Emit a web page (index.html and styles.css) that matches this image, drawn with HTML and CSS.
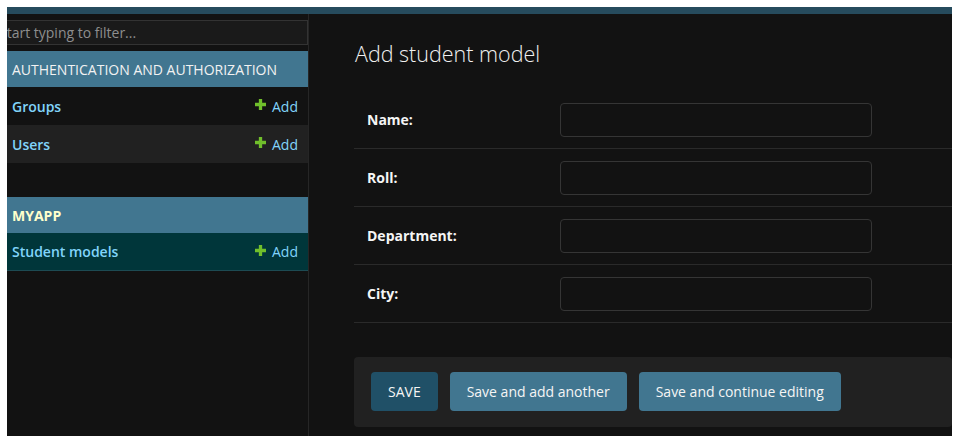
FILE: index.html
```html
<!DOCTYPE html>
<html lang="en">
<head>
<meta charset="utf-8">
<title>Add student model | Django site admin</title>
<link rel="stylesheet" href="styles.css">
</head>
<body>
<div class="frame">
  <div class="topbar"></div>
  <div class="layout">
    <nav class="sidebar">
      <input class="nav-filter" type="search" placeholder="Start typing to filter...">
      <div class="module">
        <div class="caption">Authentication and Authorization</div>
        <div class="row">
          <a class="model" href="#">Groups</a>
          <a class="addlink" href="#"><svg class="plus" viewBox="0 0 10 10" width="11" height="11"><path d="M3.5 0h3v3.5H10v3H6.5V10h-3V6.5H0v-3h3.5z" fill="#70bf2b"/></svg>Add</a>
        </div>
        <div class="row alt">
          <a class="model" href="#">Users</a>
          <a class="addlink" href="#"><svg class="plus" viewBox="0 0 10 10" width="11" height="11"><path d="M3.5 0h3v3.5H10v3H6.5V10h-3V6.5H0v-3h3.5z" fill="#70bf2b"/></svg>Add</a>
        </div>
      </div>
      <div class="module current-app">
        <div class="caption strong">MYAPP</div>
        <div class="row current">
          <a class="model" href="#">Student models</a>
          <a class="addlink" href="#"><svg class="plus" viewBox="0 0 10 10" width="11" height="11"><path d="M3.5 0h3v3.5H10v3H6.5V10h-3V6.5H0v-3h3.5z" fill="#70bf2b"/></svg>Add</a>
        </div>
      </div>
    </nav>
    <main class="content">
      <h1 class="title">Add student model</h1>
      <form class="form">
        <div class="field"><label>Name:</label><input type="text"></div>
        <div class="field"><label>Roll:</label><input type="text"></div>
        <div class="field"><label>Department:</label><input type="text"></div>
        <div class="field"><label>City:</label><input type="text"></div>
        <div class="submit-row">
          <button type="button" class="btn default">SAVE</button>
          <button type="button" class="btn">Save and add another</button>
          <button type="button" class="btn">Save and continue editing</button>
        </div>
      </form>
    </main>
  </div>
</div>
</body>
</html>
```

FILE: styles.css
```css
html, body {
  margin: 0;
  padding: 0;
  background: #ffffff;
}

body {
  font-family: "Open Sans", "Noto Sans", sans-serif;
  font-size: 14px;
  color: #eeeeee;
}

.frame {
  margin: 7px 6px 0 7px;
  height: 429px;
  background: #121212;
  overflow: hidden;
  display: flex;
  flex-direction: column;
}

.topbar {
  height: 7px;
  background: #264b5d;
  flex: none;
}

.layout {
  flex: 1;
  display: flex;
  min-height: 0;
}

.sidebar {
  width: 301px;
  flex: none;
  border-right: 1px solid #262626;
  background: #121212;
  overflow: hidden;
}

.nav-filter {
  display: block;
  box-sizing: border-box;
  margin: 6px 0 6px -9px;
  width: 310px;
  height: 25px;
  padding: 0 5px 0 0;
  background: #1a1a1a;
  border: 1px solid #333333;
  color: #eeeeee;
  font-family: inherit;
  font-size: 14px;
  outline: none;
}

.nav-filter::placeholder {
  color: #8e8e8e;
}

.module {
  margin-bottom: 34px;
}

.caption {
  height: 36px;
  display: flex;
  align-items: center;
  padding-left: 5px;
  background: #417690;
  color: #f2f2f2;
  font-size: 14px;
  text-transform: uppercase;
}

.caption.strong {
  color: #ffffcc;
  font-weight: 700;
  font-size: 14px;
}

.row {
  height: 38px;
  display: flex;
  align-items: center;
  justify-content: space-between;
  padding: 0 10px 0 5px;
  background: #121212;
}

.row.alt {
  background: #212121;
}

.row.current {
  height: 37px;
  background: #00363a;
  border-bottom: 1px solid #1d4b53;
}

.model {
  color: #81d4fa;
  font-weight: 600;
  text-decoration: none;
}

.addlink {
  color: #81d4fa;
  text-decoration: none;
  display: flex;
  align-items: center;
}

.plus {
  margin-right: 6px;
  margin-top: -3px;
}

.content {
  flex: 1;
  padding: 0 0 0 45px;
  overflow: hidden;
}

.title {
  margin: 24px 0 21px 1px;
  font-size: 21.5px;
  font-weight: 300;
  color: #f0f0f0;
  line-height: 32px;
}

.form {
  display: block;
}

.field {
  display: grid;
  grid-template-columns: 206px 312px;
  align-items: center;
  height: 57px;
  border-bottom: 1px solid #2a2a2a;
}

.field label {
  padding-left: 13px;
  font-weight: 700;
  font-size: 14px;
  color: #f5f5f5;
}

.field input {
  box-sizing: border-box;
  height: 34px;
  width: 312px;
  background: #121212;
  border: 1px solid #353535;
  border-radius: 4px;
  color: #eeeeee;
  font-family: inherit;
  font-size: 14px;
  outline: none;
}

.submit-row {
  margin-top: 34px;
  height: 70px;
  box-sizing: border-box;
  padding: 15px 17px;
  background: #212121;
  border-radius: 4px;
  display: flex;
  gap: 12px;
  align-items: flex-start;
}

.btn {
  height: 39px;
  padding: 0 17px;
  border: none;
  border-radius: 4px;
  background: #417690;
  color: #f5f5f5;
  font-family: inherit;
  font-size: 14px;
  cursor: pointer;
}

.btn.default {
  background: #205067;
}
```
